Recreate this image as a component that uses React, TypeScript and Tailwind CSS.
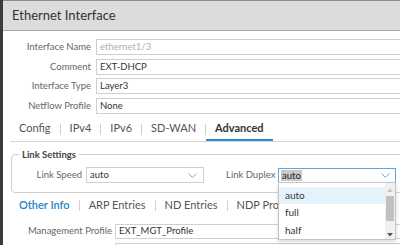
import React from "react"

const font = { fontFamily: "Lato, 'Open Sans', sans-serif" }

function Chevron({ color }: { color: string }) {
  return (
    <svg width="9" height="5" viewBox="0 0 9 5" className="shrink-0">
      <polyline points="0.5,0.5 4.5,4.5 8.5,0.5" fill="none" stroke={color} strokeWidth="1" />
    </svg>
  )
}

function FormRow({ label, value, muted }: { label: string; value: string; muted?: boolean }) {
  return (
    <div className="flex items-center h-[16px]">
      <div className="w-[88px] text-right text-[9.5px] text-[#666] leading-none">{label}</div>
      <div className="ml-[5px] flex-1 h-[16px] border border-[#cfcfcf] flex items-center pl-[3px] -mr-[10px]">
        <span className={`text-[9.5px] leading-none ${muted ? "text-[#b0b0b0]" : "text-[#333]"}`}>{value}</span>
      </div>
    </div>
  )
}

function Sep() {
  return <div className="w-px h-[11px] bg-[#d0d0d0]" />
}

function Tab({ label, active }: { label: string; active?: boolean }) {
  return (
    <div
      className={`h-[24px] px-[9px] flex items-center border-b-2 ${
        active ? "border-[#2a8fd6] font-bold text-[#333]" : "border-transparent"
      }`}
    >
      {label}
    </div>
  )
}

export default function App() {
  return (
    <div className="w-[400px] h-[245px] overflow-hidden flex bg-[#3b3b3b]" style={font}>
      <div className="w-[3px] shrink-0" />
      <div className="flex-1 flex flex-col bg-white border-t border-[#8c8c8c] relative overflow-hidden">
        {/* Header */}
        <div className="h-[30px] bg-[#dcdcdc] border-b border-[#a9a9a9] flex items-center px-[9px] shrink-0">
          <span className="text-[13px] text-[#333]">Ethernet Interface</span>
        </div>

        {/* General fields */}
        <div className="flex flex-col gap-[3.5px] pt-[8px]">
          <FormRow label="Interface Name" value="ethernet1/3" muted />
          <FormRow label="Comment" value="EXT-DHCP" />
          <FormRow label="Interface Type" value="Layer3" />
          <FormRow label="Netflow Profile" value="None" />
        </div>

        {/* Tabs */}
        <div className="ml-[7px] mt-[3.5px] border-b border-[#d6d6d6] flex items-center text-[11px] text-[#555] leading-[14px]">
          <Tab label="Config" />
          <Sep />
          <Tab label="IPv4" />
          <Sep />
          <Tab label="IPv6" />
          <Sep />
          <Tab label="SD-WAN" />
          <Sep />
          <Tab label="Advanced" active />
        </div>

        {/* Link Settings */}
        <div className="ml-[8px] -mr-[10px] mt-[12px] h-[39px] border border-[#cfcfcf] rounded-[4px] relative flex items-start pt-[12px] shrink-0">
          <div className="absolute -top-[7px] left-[7px] bg-white px-[3px] text-[9.5px] font-bold text-[#444] leading-[13px]">
            Link Settings
          </div>
          <div className="flex items-center">
            <div className="w-[70px] text-right text-[9.5px] text-[#666]">Link Speed</div>
            <div className="ml-[4px] w-[118px] h-[16px] border border-[#cfcfcf] flex items-center justify-between pl-[3px] pr-[6px]">
              <span className="text-[9.5px] text-[#333]">auto</span>
              <Chevron color="#a0a0a0" />
            </div>
            <div className="ml-[22px] w-[47px] text-[9.5px] text-[#666] whitespace-nowrap">Link Duplex</div>
            <div className="ml-[5px] w-[118px] h-[15px] border border-[#5aa7dd] flex items-center justify-between pl-[2px] pr-[5px]">
              <span className="text-[9.5px] text-[#222] bg-[#c8c8c8] px-px leading-[11px]">auto</span>
              <Chevron color="#6aa9d6" />
            </div>
          </div>
        </div>

        {/* Secondary tabs */}
        <div className="ml-[7px] mt-[5px] flex items-center text-[11px] text-[#555] leading-[14px] whitespace-nowrap">
          <div className="px-[9px] text-[#1d84cc] font-semibold">Other Info</div>
          <Sep />
          <div className="px-[9px]">ARP Entries</div>
          <Sep />
          <div className="px-[9px]">ND Entries</div>
          <Sep />
          <div className="px-[9px]">NDP Proxy</div>
        </div>

        <div className="flex items-center mt-[12px]">
          <div className="w-[109px] text-right text-[9.5px] text-[#666]">Management Profile</div>
          <div className="ml-[3px] flex-1 h-[15px] border border-[#cfcfcf] flex items-center pl-[3px] -mr-[10px]">
            <span className="text-[9.5px] text-[#333]">EXT_MGT_Profile</span>
          </div>
        </div>
        <div className="ml-[112px] -mr-[10px] mt-[4px] h-[15px] border border-[#cfcfcf] shrink-0" />

        {/* Dropdown list */}
        <div className="absolute left-[275px] top-[181px] w-[118px] h-[58px] bg-white border border-[#c4c4c4] shadow-[0_2px_4px_rgba(0,0,0,0.15)] flex">
          <div className="flex-1 flex flex-col pt-[4px]">
            <div className="h-[18px] bg-[#e3f2fb] flex items-center pl-[6px] text-[10px] text-[#333]">auto</div>
            <div className="h-[18px] flex items-center pl-[6px] text-[10px] text-[#333]">full</div>
            <div className="h-[18px] flex items-center pl-[6px] text-[10px] text-[#333]">half</div>
          </div>
          <div className="w-[10px] bg-[#f1f1f1] flex flex-col items-center pt-[5px] pb-[2px]">
            <svg width="6" height="4" viewBox="0 0 6 4"><polygon points="0,4 3,0.5 6,4" fill="#c4c4c4" /></svg>
            <div className="w-[8px] h-[25px] bg-[#c1c1c1] mt-[4px]" />
            <div className="flex-1" />
            <svg width="6" height="4" viewBox="0 0 6 4"><polygon points="0,0 3,3.5 6,0" fill="#555" /></svg>
          </div>
        </div>
      </div>
    </div>
  )
}
